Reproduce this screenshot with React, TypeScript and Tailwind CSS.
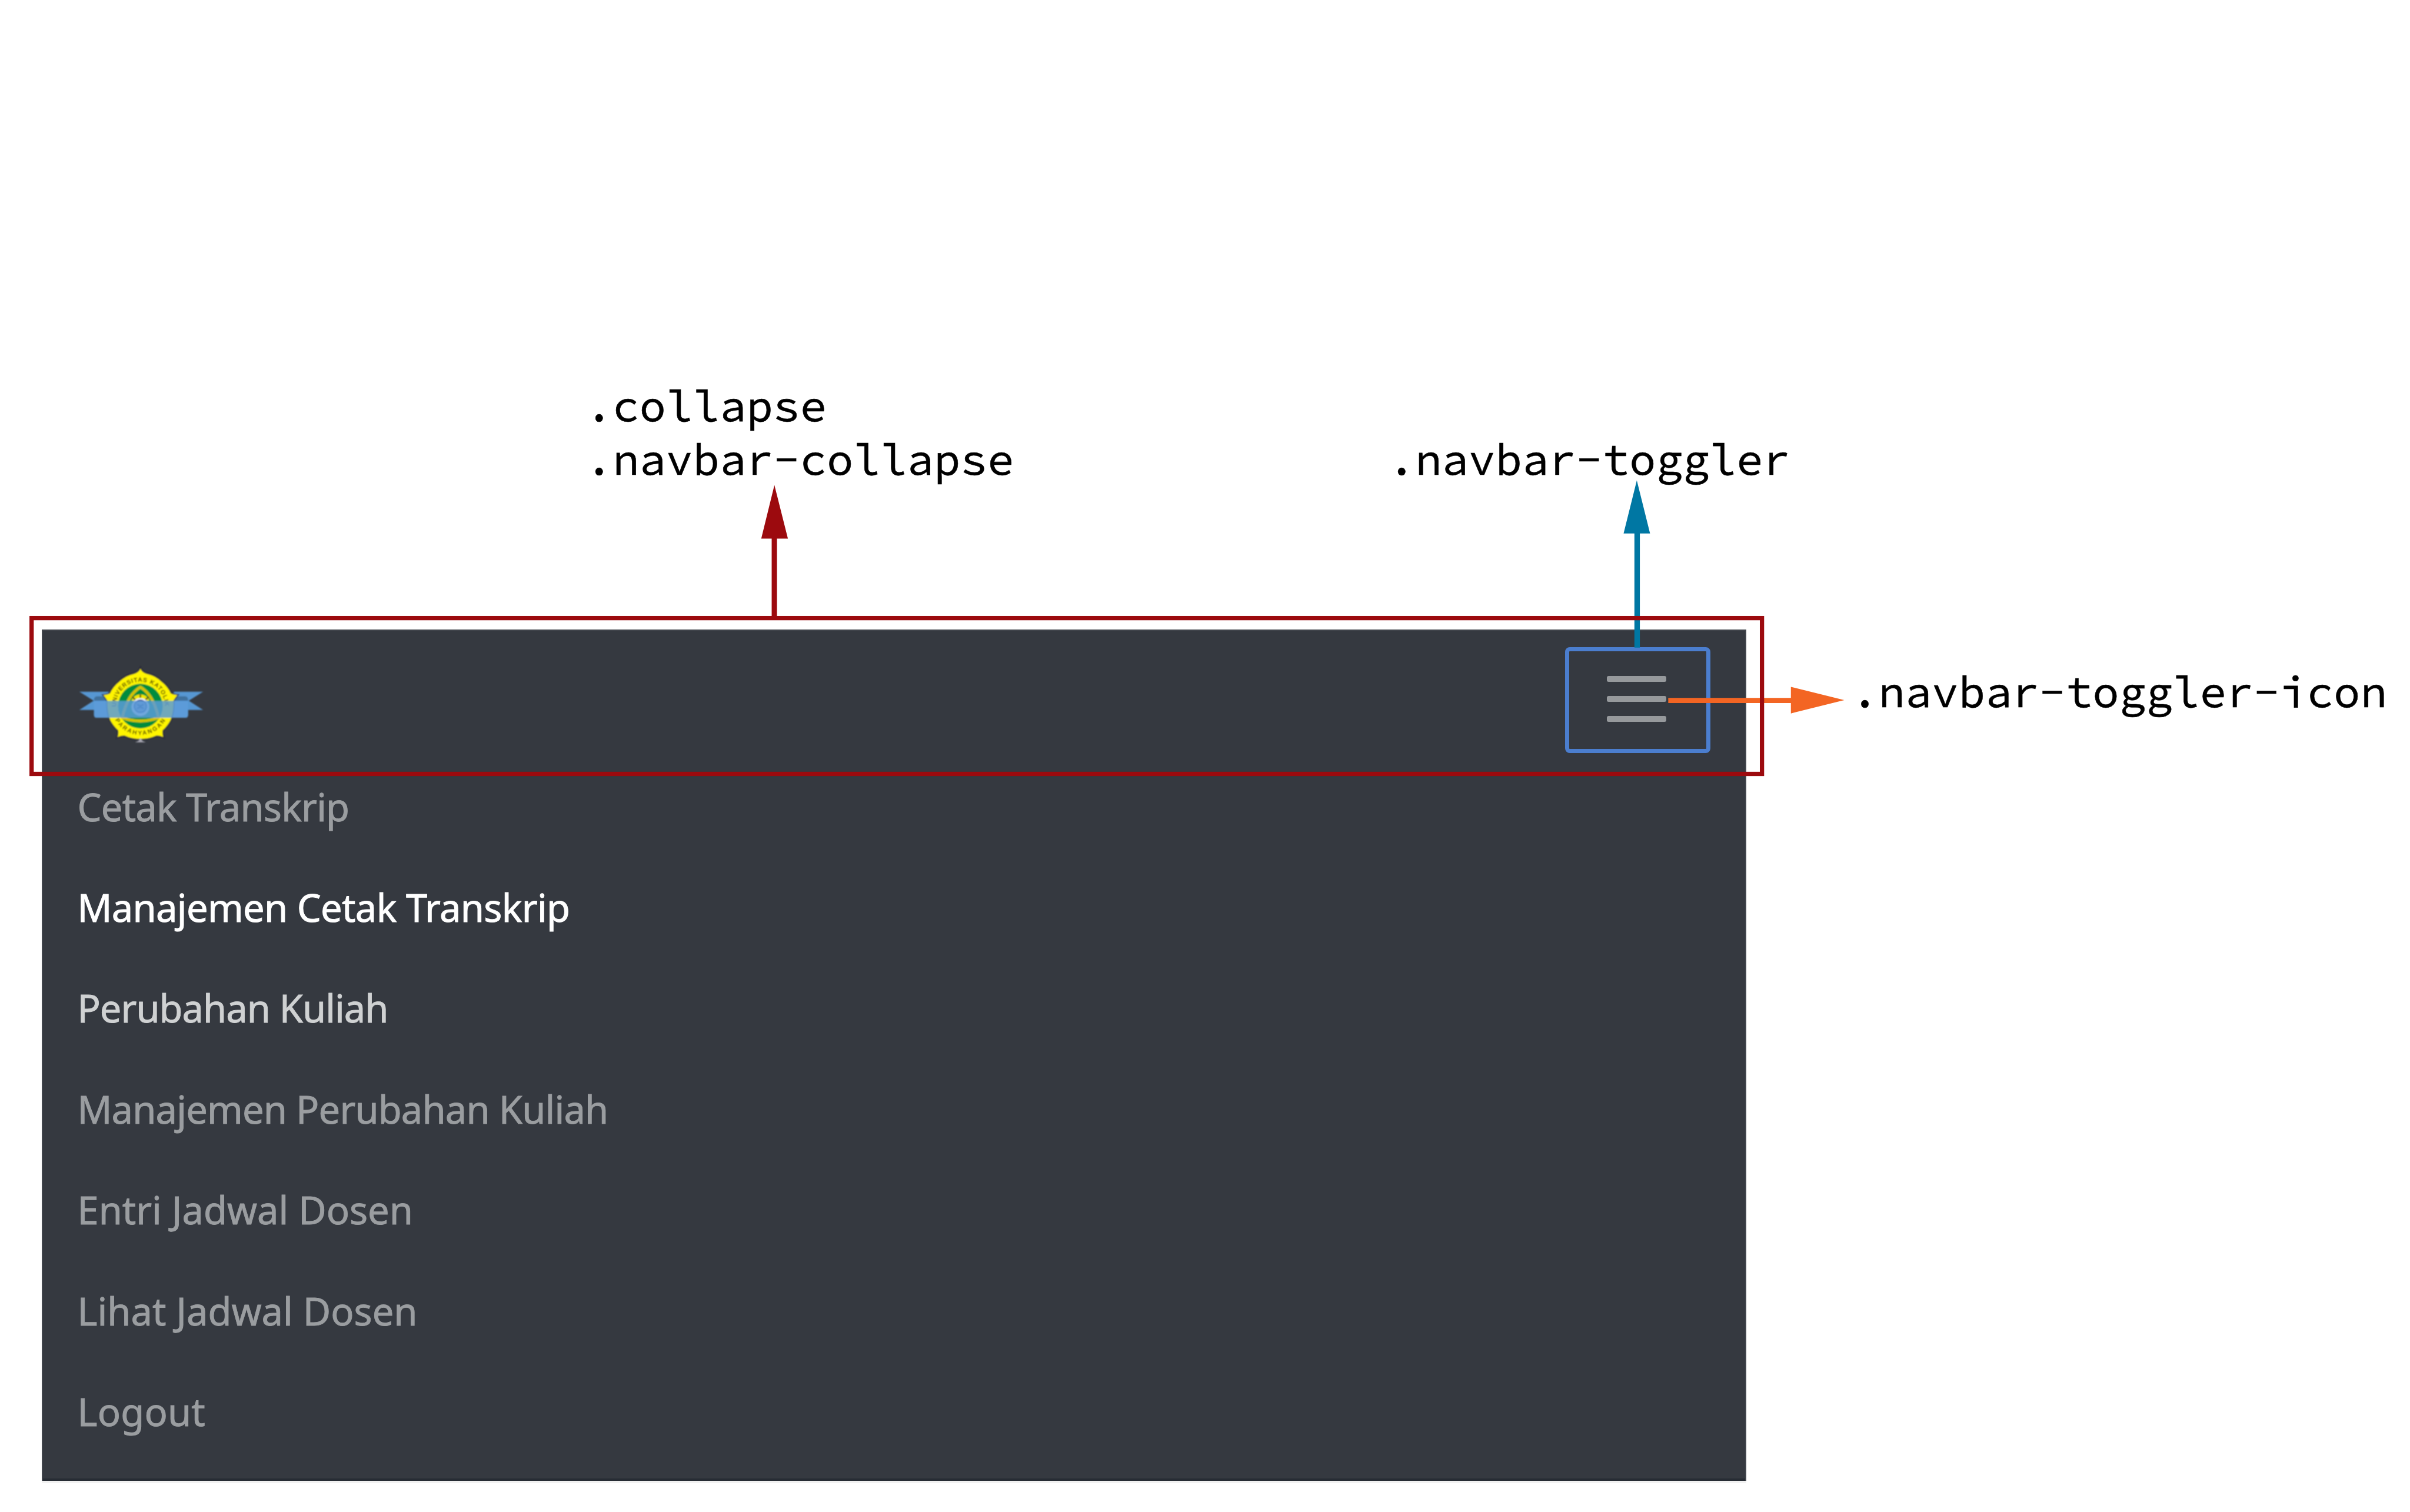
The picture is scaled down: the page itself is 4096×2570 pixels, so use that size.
const MENU = [
  { label: "Cetak Transkrip", look: "text-[#9a9da0] tracking-[-0.8px]" },
  { label: "Manajemen Cetak Transkrip", look: "text-white tracking-[-0.68px]" },
  { label: "Perubahan Kuliah", look: "text-[#cfd1d2] tracking-[-0.98px]" },
  { label: "Manajemen Perubahan Kuliah", look: "text-[#9a9da0] tracking-[-0.84px]" },
  { label: "Entri Jadwal Dosen", look: "text-[#9a9da0]" },
  { label: "Lihat Jadwal Dosen", look: "text-[#9a9da0]" },
  { label: "Logout", look: "text-[#9a9da0] tracking-[0.2px]" },
];

function Emblem() {
  return (
    <svg viewBox="0 0 750 480" className="h-[145.6px] w-[227.5px]">
      <defs>
        <path id="arc-top" d="M 231.4 245 A 137 137 0 1 1 504.6 245" />
        <path id="arc-bottom" d="M 225 310 A 161.5 161.5 0 0 0 511 310" />
        <filter id="soften" x="-5%" y="-5%" width="110%" height="110%">
          <feGaussianBlur stdDeviation="2.8" />
        </filter>
      </defs>
      <g filter="url(#soften)">
        {/* ribbon tails */}
        <path d="M26 154 H190 V256 H26 L106 204 Z" fill="#5797d3" />
        <path d="M719 154 H555 V256 H719 L639 204 Z" fill="#5797d3" />
        <path d="M108 208 V196 Q110 180 128 180 H190 V208 Z" fill="#41719d" />
        <path d="M635 208 V196 Q633 180 615 180 H555 V208 Z" fill="#41719d" />
        <path d="M108 205 H205 V300 H124 Q108 300 108 284 Z M635 205 H535 V300 H619 Q635 300 635 284 Z" fill="#5b9bd9" />
        {/* badge */}
        <path
          d="M368 25 Q378 48 404 54 Q452 64 484 96 Q522 126 539 164 Q556 172 575 173 Q562 188 553 204 Q556 262 538 312 Q519 347 493 370 Q490 388 496 408 Q476 400 458 400 Q418 419 368 419 Q318 419 279 400 Q261 400 240 408 Q247 388 243 370 Q217 347 198 312 Q180 262 183 204 Q174 188 161 173 Q180 172 197 164 Q214 126 252 96 Q284 64 332 54 Q358 48 368 25 Z"
          fill="#fff500"
          stroke="#25213a"
          strokeWidth="12"
          strokeOpacity="0.75"
          paintOrder="stroke"
        />
        <text fontFamily="Liberation Sans, sans-serif" fontWeight="700" fontSize="34" fill="#4a4300">
          <textPath href="#arc-top" startOffset="6" textLength="436" lengthAdjust="spacing">
            UNIVERSITAS KATOLIK
          </textPath>
        </text>
        <text fontFamily="Liberation Sans, sans-serif" fontWeight="700" fontSize="34" fill="#4a4300">
          <textPath href="#arc-bottom" startOffset="3" textLength="342" lengthAdjust="spacing">
            PARAHYANGAN
          </textPath>
        </text>
        <circle cx="368" cy="235" r="125" fill="#008c3c" />
        <path
          d="M368 128 Q440 170 470 300 Q420 318 368 318 Q316 318 266 300 Q296 170 368 128 Z"
          fill="#008c3c"
          stroke="#d6c400"
          strokeWidth="16"
          strokeLinejoin="round"
        />
        <path d="M318 204 Q328 172 368 168 Q408 172 418 204 Z" fill="#f4e800" />
        <path d="M322 182 L340 200 M414 182 L396 200 M368 168 V188" stroke="#6b5a10" strokeWidth="9" />
        <circle cx="368" cy="240" r="50" fill="#eef0f8" />
        <circle cx="368" cy="236" r="34" fill="#7f93c4" stroke="#1f3f8a" strokeWidth="7" />
        <path d="M350 226 L368 234 L386 226 M350 248 L368 240 L386 248" fill="none" stroke="#14306f" strokeWidth="7" />
        <path d="M368 414 L380 430 L398 438 H338 L356 430 Z" fill="#a9a8b4" />
        {/* ribbon body */}
        <path d="M108 205 H635 V284 Q635 300 619 300 H124 Q108 300 108 284 Z" fill="#5b9bd9" fillOpacity="0.86" />
      </g>
    </svg>
  );
}

function Toggler() {
  return (
    <button className="flex h-[180px] w-[247px] flex-col items-center justify-center gap-[24px] rounded-[8px] border-[7px] border-[#4b7ecf] pb-[3px] pr-[4px]">
      <span className="h-[10px] w-[101px] rounded-[3px] bg-[#96999c]" />
      <span className="h-[10px] w-[101px] rounded-[3px] bg-[#96999c]" />
      <span className="h-[10px] w-[101px] rounded-[3px] bg-[#96999c]" />
    </button>
  );
}

function Arrows() {
  return (
    <svg viewBox="0 0 4500 2823" className="pointer-events-none absolute inset-0 h-full w-full">
      <path d="M3056.3 896.7 L3081 996 H3062 V1209 H3051.8 V996 H3031.6 Z" fill="#0077a3" />
      <path d="M3115 1303 H3344 V1282.3 L3443.7 1307 L3344 1332 V1312.7 H3115 Z" fill="#f36523" />
      <path d="M1446 905.7 L1471.2 1005.6 H1450.8 V1152 H1440.9 V1005.6 H1421.4 Z" fill="#9c0a0e" />
      <rect x="59" y="1154" width="3231" height="291" fill="none" stroke="#9c0a0e" strokeWidth="8" />
    </svg>
  );
}

const LABEL =
  "absolute whitespace-pre text-[75.85px] leading-[91px] text-black [-webkit-text-stroke:0.6px_black] font-['Source_Code_Pro','Liberation_Mono',monospace]";

export default function App() {
  return (
    <main className="relative h-[2570px] w-[4096px] overflow-hidden bg-white pl-[71px] pt-[1069.5px]">
      <nav className="h-[1447px] w-[2897px] border-x-2 border-t-2 border-[#41454c] bg-[#353940] shadow-[inset_0_-4px_0_#272c34,0_4px_0_#f1f1f1]">
        <header className="flex h-[214px] items-start justify-between pl-[54.4px] pr-[59px]">
          <div className="pt-[57px]">
            <Emblem />
          </div>
          <div className="pt-[28px]">
            <Toggler />
          </div>
        </header>
        <ul className="pl-[58.5px] text-[65px] leading-[171.43px] [-webkit-text-stroke:0.9px_currentColor] font-['Noto_Sans','Open_Sans',sans-serif]">
          {MENU.map((item) => (
            <li key={item.label} className={item.look}>
              {item.label}
            </li>
          ))}
        </ul>
      </nav>
      <p className={`${LABEL} left-[995.4px] top-[643.7px]`}>{".collapse\n.navbar-collapse"}</p>
      <p className={`${LABEL} left-[2359.4px] top-[734.7px]`}>.navbar-toggler</p>
      <p className={`${LABEL} left-[3146.8px] top-[1130.3px]`}>.navbar-toggler-icon</p>
      <Arrows />
    </main>
  );
}
